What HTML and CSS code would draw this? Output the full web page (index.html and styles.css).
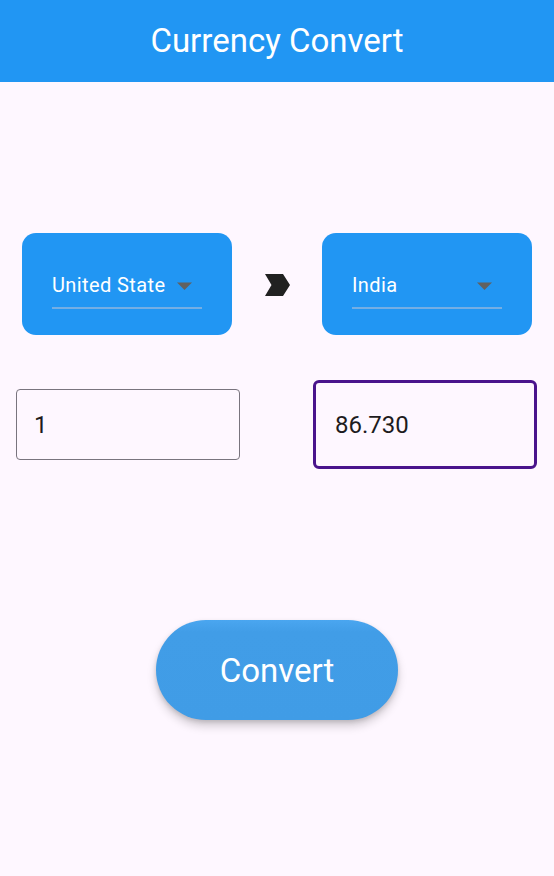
FILE: index.html
```html
<!DOCTYPE html>
<html lang="en">
<head>
<meta charset="utf-8">
<title>Currency Convert</title>
<link rel="stylesheet" href="styles.css">
</head>
<body>
<header class="appbar">
  <h1 class="appbar-title">Currency Convert</h1>
</header>
<main class="content">
  <section class="picker-row">
    <div class="picker-card">
      <div class="dropdown">
        <div class="dropdown-value">
          <span class="dropdown-text">United State</span>
          <svg class="dropdown-caret" width="15" height="8" viewBox="0 0 15 8"><polygon points="0,0.5 15,0.5 7.5,8" fill="#616161"/></svg>
        </div>
        <div class="dropdown-line"></div>
      </div>
    </div>
    <svg class="chevron" width="25" height="22" viewBox="0 0 25 22"><polygon points="0,0 18,0 25,11 18,22 0,22 6.5,11" fill="#212121"/></svg>
    <div class="picker-card">
      <div class="dropdown">
        <div class="dropdown-value">
          <span class="dropdown-text">India</span>
          <svg class="dropdown-caret" width="15" height="8" viewBox="0 0 15 8"><polygon points="0,0.5 15,0.5 7.5,8" fill="#616161"/></svg>
        </div>
        <div class="dropdown-line"></div>
      </div>
    </div>
  </section>
  <section class="field-row">
    <div class="field">1</div>
    <div class="field field-focused">86.730</div>
  </section>
  <div class="action">
    <button class="convert-btn" type="button">Convert</button>
  </div>
</main>
</body>
</html>
```
FILE: styles.css
```css
html, body {
  margin: 0;
  padding: 0;
}
body {
  background: #FEF7FF;
  font-family: Roboto, "Noto Sans", sans-serif;
  width: 554px;
  height: 876px;
  overflow: hidden;
}
.appbar {
  height: 82px;
  background: #2196F3;
  display: flex;
  align-items: center;
  justify-content: center;
}
.appbar-title {
  margin: 0;
  font-weight: 400;
  font-size: 33px;
  line-height: 40px;
  color: #ffffff;
}
.content {
  display: flex;
  flex-direction: column;
}
.picker-row {
  margin-top: 151px;
  padding: 0 22px;
  display: flex;
  align-items: center;
  justify-content: space-between;
}
.picker-card {
  width: 210px;
  height: 102px;
  box-sizing: border-box;
  background: #2196F3;
  border-radius: 14px;
  padding: 40px 30px 0;
}
.dropdown {
  width: 150px;
}
.dropdown-value {
  display: flex;
  align-items: center;
  justify-content: space-between;
  height: 24px;
  padding-right: 10px;
}
.dropdown-text {
  font-size: 20px;
  line-height: 24px;
  letter-spacing: 0.4px;
  color: #ffffff;
}
.dropdown-caret {
  display: block;
  margin-top: 1px;
}
.dropdown-line {
  margin-top: 10px;
  height: 2px;
  background: #74AEE4;
}
.chevron {
  display: block;
  margin-top: 1px;
}
.field-row {
  margin-top: 45px;
  padding: 0 17px 0 16px;
  display: flex;
  align-items: center;
  justify-content: space-between;
  height: 89px;
}
.field {
  width: 224px;
  height: 71px;
  box-sizing: border-box;
  border: 1px solid #79747E;
  border-radius: 4px;
  padding-left: 17px;
  display: flex;
  align-items: center;
  font-size: 24px;
  color: #1D1B20;
}
.field-focused {
  height: 89px;
  border: 3px solid #4A148C;
  border-radius: 6px;
  padding-left: 19px;
}
.action {
  margin-top: 151px;
  display: flex;
  justify-content: center;
}
.convert-btn {
  width: 242px;
  height: 100px;
  border: none;
  border-radius: 50px;
  background: #409CE6;
  background-image: linear-gradient(#4AA6F0 0, #419DE7 12px, #409CE6 100%);
  color: #ffffff;
  font-family: Roboto, "Noto Sans", sans-serif;
  font-size: 33px;
  box-shadow: 0 6px 10px rgba(0, 0, 0, 0.18), 0 2px 4px rgba(0, 0, 0, 0.12);
  margin-left: 0;
  padding: 0;
}
```
